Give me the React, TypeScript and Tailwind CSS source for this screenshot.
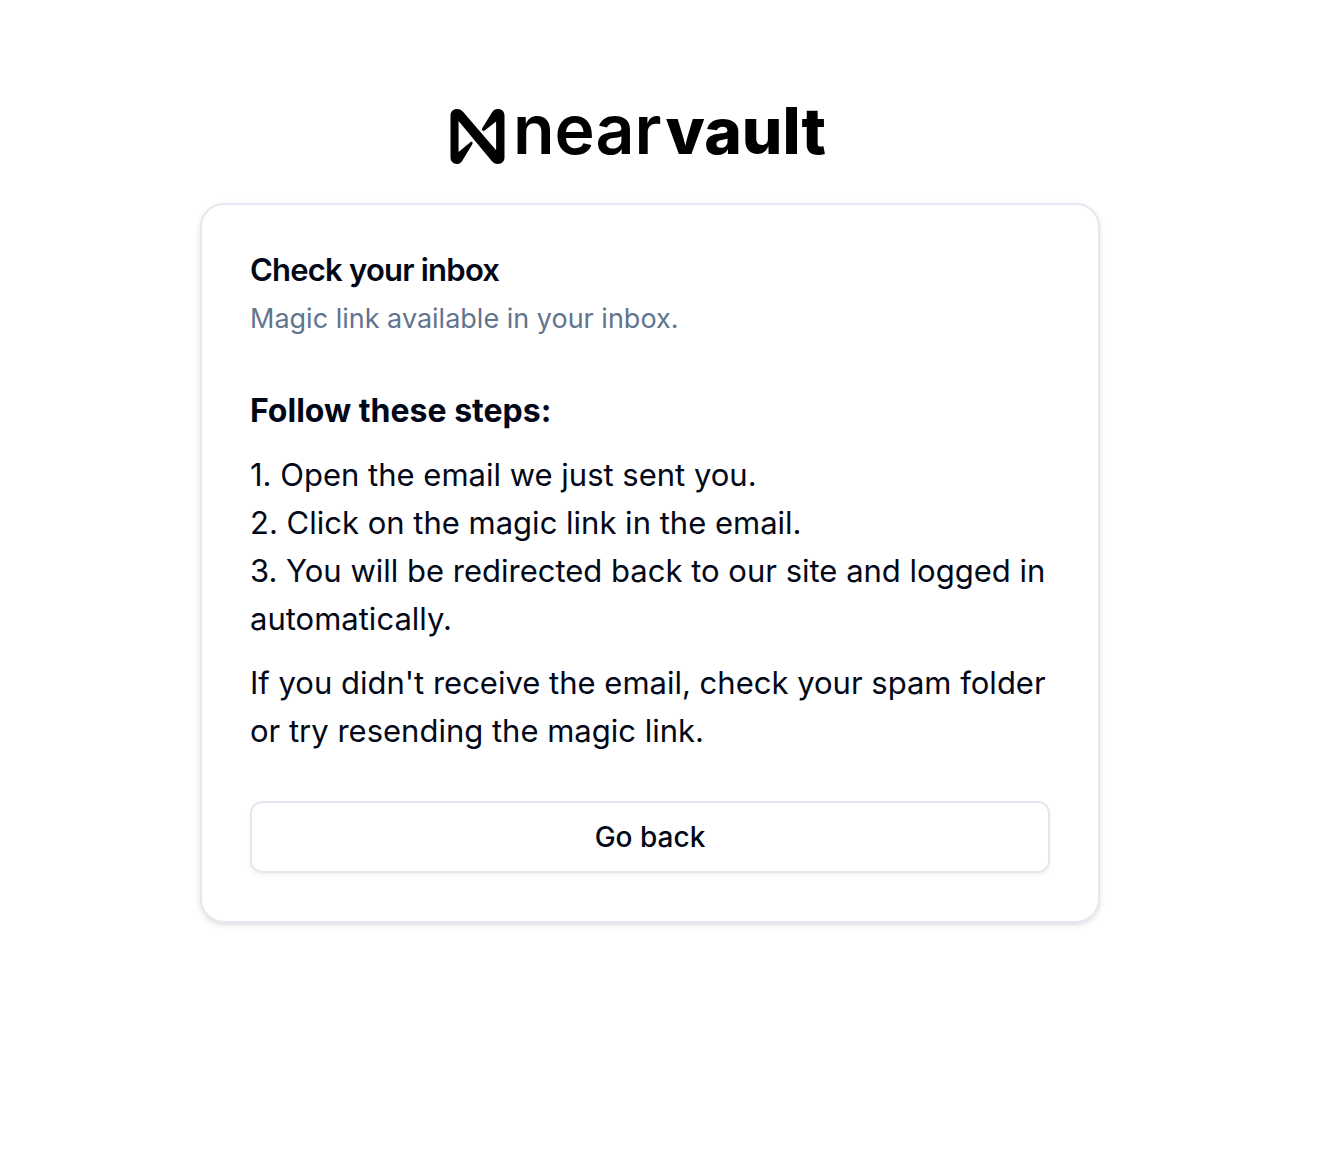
function Logo() {
  return (
    <div className="mr-6 flex h-[72px] items-center gap-2 text-black" role="img" aria-label="nearvault">
      <svg className="mt-0.5 h-[55px] w-[55px]" viewBox="59 57 161 164" fill="currentColor" aria-hidden="true">
        <path d="M59 77C59 65 67 57 79 57C86 57 92 60 97 66L195 180V94L161 121C156 125 150 120 154 114L182 68C187 60 193 57 200 57C212 57 220 65 220 77V201C220 213 212 221 200 221C192 221 187 218 182 212L83 93V185L118 156C123 153 127 157 124 162L96 208C91 217 86 221 79 221C67 221 59 213 59 201Z" />
      </svg>
      <div className="flex items-baseline gap-1 pb-3 leading-none">
        <span className="text-[68px] font-semibold">near</span>
        <span className="text-[64px] font-extrabold">vault</span>
      </div>
    </div>
  );
}

const steps = [
  "Open the email we just sent you.",
  "Click on the magic link in the email.",
  "You will be redirected back to our site and logged in automatically.",
];

export default function App() {
  return (
    <main className="flex flex-col items-center bg-white pt-[99px] pr-12 pb-12 pl-6 font-['Inter',sans-serif] text-[#020817]">
      <Logo />
      <section className="mt-8 w-full max-w-[900px] rounded-3xl border-2 border-slate-200 p-12 shadow-[0_2px_6px_rgb(0_0_0/0.1),0_2px_4px_-2px_rgb(0_0_0/0.1)]">
        <h1 className="text-[31px] leading-[34px] font-semibold tracking-tight">Check your inbox</h1>
        <p className="mt-3 text-[27px] leading-10 text-slate-500">Magic link available in your inbox.</p>
        <h2 className="mt-12 text-[32px] leading-12 font-bold">Follow these steps:</h2>
        <ol className="mt-4 text-[31px] leading-12">
          {steps.map((step, i) => (
            <li key={step}>{`${i + 1}. ${step}`}</li>
          ))}
        </ol>
        <p className="mt-4 text-[31px] leading-12">
          If you didn't receive the email, check your spam folder or try resending the magic link.
        </p>
        <button type="button" className="mt-[46px] h-[72px] w-full rounded-xl border-2 border-slate-200 text-[28px] font-medium shadow-[0_2px_4px_rgb(0_0_0/0.05)]">
          Go back
        </button>
      </section>
    </main>
  );
}
